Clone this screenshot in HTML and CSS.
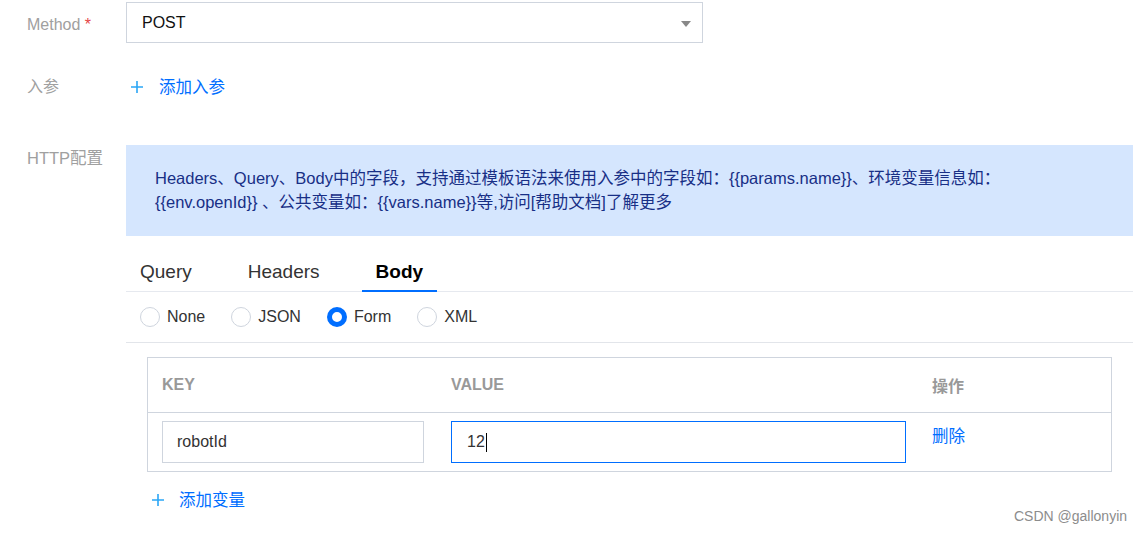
FILE: index.html
```html
<!DOCTYPE html>
<html lang="zh-CN">
<head>
<meta charset="utf-8">
<title>HTTP配置</title>
<link rel="stylesheet" href="styles.css">
</head>
<body>
<div class="form">
  <div class="row row-method">
    <div class="label label-method">Method <span class="req">*</span></div>
    <div class="select">
      <span class="select-value">POST</span>
      <svg class="select-arrow" width="10" height="6" viewBox="0 0 10 6"><path d="M0 0H10L5 6Z" fill="#888"/></svg>
    </div>
  </div>

  <div class="row row-params">
    <div class="label">入参</div>
    <div class="add-link">
      <svg class="plus" width="12" height="12" viewBox="0 0 12 12"><path d="M6 0V12M0 6H12" stroke="#2ba6f6" stroke-width="1.6"/></svg>
      <span>添加入参</span>
    </div>
  </div>

  <div class="row row-http">
    <div class="label label-http">HTTP配置</div>
    <div class="http-body">
      <div class="alert">Headers、Query、Body中的字段，支持通过模板语法来使用入参中的字段如：{{params.name}}、环境变量信息如：<br>{{env.openId}} 、公共变量如：{{vars.name}}等,访问[帮助文档]了解更多</div>

      <div class="tabs">
        <div class="tab">Query</div>
        <div class="tab">Headers</div>
        <div class="tab tab-active">Body</div>
      </div>

      <div class="radios">
        <div class="radio"><span class="dot"></span>None</div>
        <div class="radio"><span class="dot"></span>JSON</div>
        <div class="radio"><span class="dot dot-on"></span>Form</div>
        <div class="radio"><span class="dot"></span>XML</div>
      </div>

      <div class="table-wrap">
        <div class="table">
          <div class="tr th">
            <div class="td c1">KEY</div>
            <div class="td c2">VALUE</div>
            <div class="td c3">操作</div>
          </div>
          <div class="tr tb">
            <div class="td c1"><div class="input">robotId</div></div>
            <div class="td c2"><div class="input input-focus">12<span class="caret"></span></div></div>
            <div class="td c3"><span class="del">删除</span></div>
          </div>
        </div>
        <div class="add-link add-var">
          <svg class="plus" width="12" height="12" viewBox="0 0 12 12"><path d="M6 0V12M0 6H12" stroke="#2ba6f6" stroke-width="1.6"/></svg>
          <span>添加变量</span>
        </div>
      </div>
    </div>
  </div>
</div>
<div class="watermark">CSDN @gallonyin</div>
</body>
</html>
```

FILE: styles.css
```css
html, body {
  margin: 0;
  padding: 0;
  background: #fff;
}
body {
  font-family: "Liberation Sans", Arial, "Noto Sans CJK SC", sans-serif;
  font-size: 16px;
  color: #333;
  width: 1142px;
  height: 533px;
  overflow: hidden;
  position: relative;
}
.form {
  padding: 2px 9px 0 27px;
}
.row {
  display: flex;
  align-items: flex-start;
}
.label {
  width: 99px;
  flex: none;
  color: #a0a0a0;
  font-size: 16px;
  line-height: 22px;
}
.label-method {
  padding-top: 12px;
}
.req {
  color: #e54545;
}
.select {
  box-sizing: border-box;
  width: 577px;
  height: 41px;
  border: 1px solid #cfd5de;
  display: flex;
  align-items: center;
  justify-content: space-between;
  padding: 0 11px 0 15px;
}
.select-value {
  color: #111;
  font-size: 16px;
}
.select-arrow {
  display: block;
  margin-top: 2px;
}
.row-params {
  margin-top: 33px;
}
.add-link {
  display: flex;
  align-items: center;
  color: #006eff;
  font-size: 16.5px;
  line-height: 22px;
}
.add-link .plus {
  display: block;
  margin-left: 5px;
  margin-right: 16px;
}
.row-http {
  margin-top: 47px;
}
.label-http {
  padding-top: 2px;
  font-size: 16.5px;
}
.http-body {
  flex: 1;
  min-width: 0;
}
.alert {
  background: #d5e6fe;
  color: #182f86;
  font-size: 16.5px;
  line-height: 24px;
  padding: 21px 29px 22px;
}
.tabs {
  display: flex;
  gap: 28px;
  border-bottom: 1px solid #e6e9ef;
}
.tab {
  padding: 25px 14px 7px;
  line-height: 22px;
  font-size: 19px;
  color: #333;
  border-bottom: 2px solid transparent;
  margin-bottom: -1px;
}
.tab-active {
  font-weight: bold;
  color: #000;
  border-bottom-color: #006eff;
}
.radios {
  display: flex;
  align-items: center;
  height: 50px;
  padding-left: 14px;
  border-bottom: 1px solid #e2e5ea;
}
.radio {
  display: flex;
  align-items: center;
  margin-right: 26px;
  font-size: 16px;
  color: #333;
}
.dot {
  box-sizing: border-box;
  width: 20px;
  height: 20px;
  border-radius: 50%;
  border: 1px solid #cfd5de;
  margin-right: 7px;
  background: #fff;
}
.dot-on {
  border: 5px solid #006eff;
}
.table-wrap {
  padding: 14px 21px 0;
}
.table {
  border: 1px solid #cfd5de;
}
.tr {
  display: flex;
}
.th {
  height: 54px;
  align-items: center;
  border-bottom: 1px solid #cfd5de;
  font-weight: bold;
  color: #999;
  font-size: 16px;
}
.tb {
  padding: 8px 0;
  align-items: flex-start;
}
.td {
  box-sizing: border-box;
  padding-left: 14px;
}
.c1 {
  width: 289px;
  padding-right: 13px;
}
.c2 {
  width: 481px;
  padding-right: 12px;
}
.c3 {
  flex: 1;
}
.input {
  box-sizing: border-box;
  height: 42px;
  border: 1px solid #cfd5de;
  padding-left: 14px;
  display: flex;
  align-items: center;
  font-size: 16px;
  color: #333;
}
.input-focus {
  border-color: #006eff;
  padding-left: 15px;
}
.caret {
  display: inline-block;
  width: 1px;
  height: 19px;
  background: #000;
  margin-left: 1px;
}
.del {
  display: block;
  color: #006eff;
  font-size: 16.5px;
  line-height: 26px;
  padding-top: 2px;
}
.add-var {
  margin-top: 17px;
}
.add-var .plus {
  margin-right: 15px;
}
.watermark {
  position: absolute;
  left: 1014px;
  top: 508px;
  font-size: 14px;
  line-height: 16px;
  color: #8c8c8c;
  white-space: nowrap;
}
```
